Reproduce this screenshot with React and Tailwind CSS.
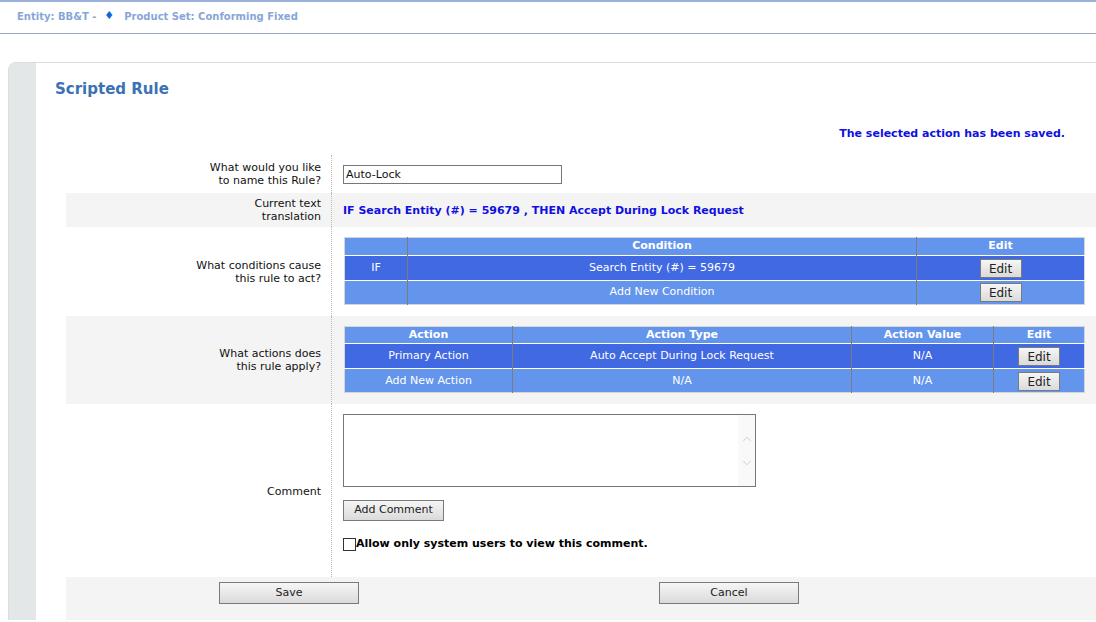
import { ChevronUp, ChevronDown } from "lucide-react";

const font = { fontFamily: '"DejaVu Sans", Verdana, sans-serif' };

const Btn = ({ children, className = "" }) => (
  <button
    className={`border border-[#7a7a7a] bg-gradient-to-b from-[#f6f6f6] to-[#dadada] text-[11px] text-[#222] ${className}`}
  >
    {children}
  </button>
);

const Row = ({ label, gray, className = "", children, labelClass = "" }) => (
  <div className={`grid grid-cols-[265px_1fr] ${gray ? "bg-[#f4f4f4]" : "bg-white"} ${className}`}>
    <div className={`flex items-center justify-end pr-[10px] text-right text-[11px] leading-[13px] text-[#111] ${labelClass}`}>
      {label}
    </div>
    <div className="flex items-center border-l border-dotted border-[#bbb] pl-[11px] pr-[12px]">{children}</div>
  </div>
);

const th = "h-[16px] text-[11px] font-bold text-white border-l border-[#7c7c7c] first:border-l-0";
const td = "text-[11px] text-white border-l border-[#7c7c7c] first:border-l-0 text-center";

export default function App() {
  return (
    <div className="min-h-[622px] w-[1096px] overflow-hidden bg-white" style={font}>
      {/* breadcrumb */}
      <div className="h-[34px] border-t-2 border-b border-t-[#9bb0d8] border-b-[#9aa8c4] flex items-center pl-[17px] pb-[3px] text-[10px] font-bold text-[#87a6d8]">
        <span>Entity: BB&amp;T -</span>
        <span className="ml-[8px] text-[11px] text-[#1565d8]">♦</span>
        <span className="ml-[10px]">Product Set: Conforming Fixed</span>
      </div>

      <div className="h-[28px]" />

      {/* panel */}
      <div className="ml-[8px] flex rounded-tl-[8px] border-t border-l border-[#dcdcdc]">
        <div className="w-[27px] shrink-0 rounded-tl-[7px] bg-[#e3e7e8]" />
        <div className="flex-1">
          <div className="pl-[19px] pt-[15px] text-[15px] font-bold text-[#3b72b5]">Scripted Rule</div>
          <div className="mt-[25px] pr-[32px] text-right text-[11px] font-bold text-[#1010e0]">
            The selected action has been saved.
          </div>

          <div className="ml-[30px] mt-[13px]">
            <Row label={<span>What would you like<br />to name this Rule?</span>} className="h-[38px]">
              <input
                readOnly
                value="Auto-Lock"
                className="h-[19px] w-[219px] border border-[#777] px-[2px] text-[11px] text-[#111] outline-none"
                style={font}
              />
            </Row>
            <Row gray label={<span>Current text<br />translation</span>} className="h-[34px]">
              <span className="pt-[3px] text-[11px] font-bold text-[#1010e0]">
                IF Search Entity (#) = 59679 , THEN Accept During Lock Request
              </span>
            </Row>
            <Row label={<span>What conditions cause<br />this rule to act?</span>} className="h-[89px]">
              <table className="ml-[1px] mb-[1px] w-[741px] border border-[#d6d6d6] bg-[#6495ed] border-collapse">
                <tbody>
                  <tr className="border-b border-white">
                    <th className={`${th} w-[63px]`}></th>
                    <th className={th}>Condition</th>
                    <th className={`${th} w-[168px]`}>Edit</th>
                  </tr>
                  <tr className="h-[25px] bg-[#4169e1] border-b border-white">
                    <td className={td}>IF</td>
                    <td className={td}>Search Entity (#) = 59679</td>
                    <td className={td}>
                      <Btn className="h-[19px] w-[42px] mt-[1px] text-[12px]">Edit</Btn>
                    </td>
                  </tr>
                  <tr className="h-[24px]">
                    <td className={td}></td>
                    <td className={td}>Add New Condition</td>
                    <td className={td}>
                      <Btn className="h-[19px] w-[42px] mt-[1px] text-[12px]">Edit</Btn>
                    </td>
                  </tr>
                </tbody>
              </table>
            </Row>
            <Row gray label={<span>What actions does<br />this rule apply?</span>} className="h-[88px]">
              <table className="ml-[1px] mb-[1px] w-[741px] border border-[#d6d6d6] bg-[#6495ed] border-collapse">
                <tbody>
                  <tr className="border-b border-white">
                    <th className={`${th} w-[168px]`}>Action</th>
                    <th className={th}>Action Type</th>
                    <th className={`${th} w-[142px]`}>Action Value</th>
                    <th className={`${th} w-[91px]`}>Edit</th>
                  </tr>
                  <tr className="h-[25px] bg-[#4169e1] border-b border-white">
                    <td className={td}>Primary Action</td>
                    <td className={td}>Auto Accept During Lock Request</td>
                    <td className={td}>N/A</td>
                    <td className={td}>
                      <Btn className="h-[19px] w-[42px] mt-[1px] text-[12px]">Edit</Btn>
                    </td>
                  </tr>
                  <tr className="h-[24px]">
                    <td className={td}>Add New Action</td>
                    <td className={td}>N/A</td>
                    <td className={td}>N/A</td>
                    <td className={td}>
                      <Btn className="h-[19px] w-[42px] mt-[1px] text-[12px]">Edit</Btn>
                    </td>
                  </tr>
                </tbody>
              </table>
            </Row>
            <Row label="Comment" className="h-[173px]" labelClass="pt-[2px]">
              <div className="flex h-full flex-col items-start pt-[10px]">
                <div className="flex h-[73px] w-[413px] justify-end border border-[#777]">
                  <div className="flex w-[17px] flex-col items-center justify-center gap-[10px] bg-[#f9f9f9] text-[#c8c8c8]">
                    <ChevronUp size={14} strokeWidth={1.5} />
                    <ChevronDown size={14} strokeWidth={1.5} />
                  </div>
                </div>
                <Btn className="mt-[13px] h-[21px] w-[101px]">Add Comment</Btn>
                <label className="mt-[15px] flex items-center text-[11px] font-bold text-black">
                  <span className="h-[13px] w-[13px] border border-[#333] bg-white" />
                  Allow only system users to view this comment.
                </label>
              </div>
            </Row>
            <div className="flex h-[43px] items-start bg-[#f4f4f4] pt-[5px]">
              <Btn className="ml-[153px] h-[22px] w-[140px]">Save</Btn>
              <Btn className="ml-[300px] h-[22px] w-[140px]">Cancel</Btn>
            </div>
          </div>
        </div>
      </div>
    </div>
  );
}
